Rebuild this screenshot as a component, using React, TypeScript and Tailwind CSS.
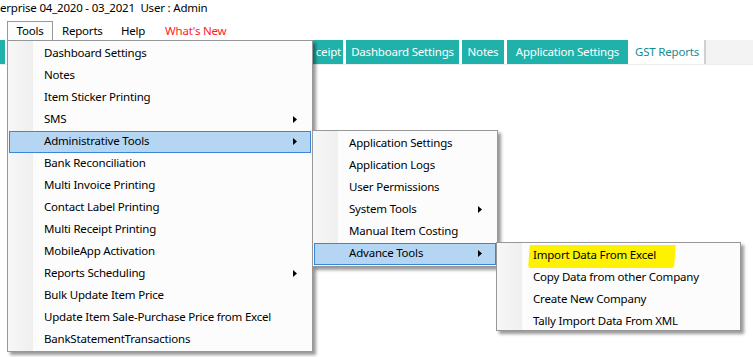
import React from "react";

const TOOLS_ITEMS = [
    { label: "Dashboard Settings" },
    { label: "Notes" },
    { label: "Item Sticker Printing" },
    { label: "SMS", sub: true },
    { label: "Administrative Tools", sub: true, active: true },
    { label: "Bank Reconciliation" },
    { label: "Multi Invoice Printing" },
    { label: "Contact Label Printing" },
    { label: "Multi Receipt Printing" },
    { label: "MobileApp Activation" },
    { label: "Reports Scheduling", sub: true },
    { label: "Bulk Update Item Price" },
    { label: "Update Item Sale-Purchase Price from Excel" },
    { label: "BankStatementTransactions" },
];

const ADMIN_ITEMS = [
    { label: "Application Settings" },
    { label: "Application Logs" },
    { label: "User Permissions" },
    { label: "System Tools", sub: true },
    { label: "Manual Item Costing" },
    { label: "Advance Tools", sub: true, active: true },
];

const ADVANCE_ITEMS = [
    { label: "Import Data From Excel", marked: true },
    { label: "Copy Data from other Company" },
    { label: "Create New Company" },
    { label: "Tally Import Data From XML" },
];

type Item = { label: string; sub?: boolean; active?: boolean; marked?: boolean };

function Arrow() {
    return (
        <svg width="4" height="7" viewBox="0 0 4 7" className="shrink-0">
            <path d="M0 0 L4 3.5 L0 7 Z" fill="#000" />
        </svg>
    );
}

function Menu({ items, className }: { items: Item[]; className: string }) {
    return (
        <div
            className={
                "absolute flex bg-[#fcfcfc] border border-[#979797] pt-[2px] shadow-[3px_3px_3px_rgba(0,0,0,0.4)] " +
                className
            }
        >
            <div className="absolute left-0 top-0 bottom-0 w-[25px] bg-gradient-to-r from-[#f7f7f7] to-[#efefef]" />
            <div className="relative flex flex-col w-full overflow-hidden">
                {items.map((it) => (
                    <div
                        key={it.label}
                        className={
                            "h-[22px] shrink-0 mx-[1px] flex items-center pl-[34px] pr-[13px] pb-[2px] border " +
                            (it.active ? "bg-[#b5d6f3] border-[#3a87d6]" : "border-transparent")
                        }
                    >
                        <span className="relative">
                            {it.marked && (
                                <span className="absolute left-[-4px] right-[-19px] top-[-4px] bottom-[-5px] bg-[#fff200] rounded-[3px] skew-x-[-4deg]" />
                            )}
                            <span className="relative">{it.label}</span>
                        </span>
                        <span className="flex-1" />
                        {it.sub && <Arrow />}
                    </div>
                ))}
            </div>
        </div>
    );
}

export default function App() {
    return (
        <div
            className="relative w-[753px] h-[357px] bg-white overflow-hidden text-[11.5px] tracking-[-0.2px] text-black"
            style={{ fontFamily: '"Noto Sans", "Open Sans", sans-serif' }}
        >
            {/* title line */}
            <div className="h-[16px] leading-[15px] whitespace-pre">
                erprise 04_2020 - 03_2021  User : Admin
            </div>

            {/* menu bar */}
            <div className="h-[24px] pt-[5px] flex items-start">
                <div className="ml-[7px] h-[20px] w-[46px] pb-[1px] border border-b-0 border-[#999] bg-[#fcfcfc] flex items-center justify-center">
                    Tools
                </div>
                <div className="w-[59px] pl-[9px] h-[20px] pb-[1px] flex items-center">Reports</div>
                <div className="w-[44px] pl-[9px] h-[20px] pb-[1px] flex items-center">Help</div>
                <div className="pl-[9px] h-[20px] pb-[1px] flex items-center text-[#ff1a1a]">What's New</div>
            </div>

            {/* tab strip */}
            <div className="h-[25px] flex items-stretch border-b border-[#ececec]">
                <div className="w-[5px] bg-[#20b2aa]" />
                <div className="w-[305px]" />
                <div className="w-[33px] bg-[#20b2aa] text-white flex items-center justify-end pr-[2px]">ceipt</div>
                <div className="ml-[3px] w-[113px] bg-[#20b2aa] text-white flex items-center justify-center">Dashboard Settings</div>
                <div className="ml-[3px] w-[42px] bg-[#20b2aa] text-white flex items-center justify-center">Notes</div>
                <div className="ml-[3px] w-[121px] bg-[#20b2aa] text-white flex items-center justify-center">Application Settings</div>
                <div className="ml-[2px] w-[76px] bg-white text-[#168b95] border-r-2 border-[#cfcfcf] flex items-center justify-center">GST Reports</div>
                <div className="flex-1 bg-[#f3f3f3]" />
            </div>

            <Menu items={TOOLS_ITEMS} className="left-[7px] top-[40px] w-[306px] h-[312px]" />
            <Menu items={ADMIN_ITEMS} className="left-[312px] top-[130px] w-[186px] h-[137px]" />
            <Menu items={ADVANCE_ITEMS} className="left-[496px] top-[242px] w-[245px] h-[89px]" />
        </div>
    );
}
